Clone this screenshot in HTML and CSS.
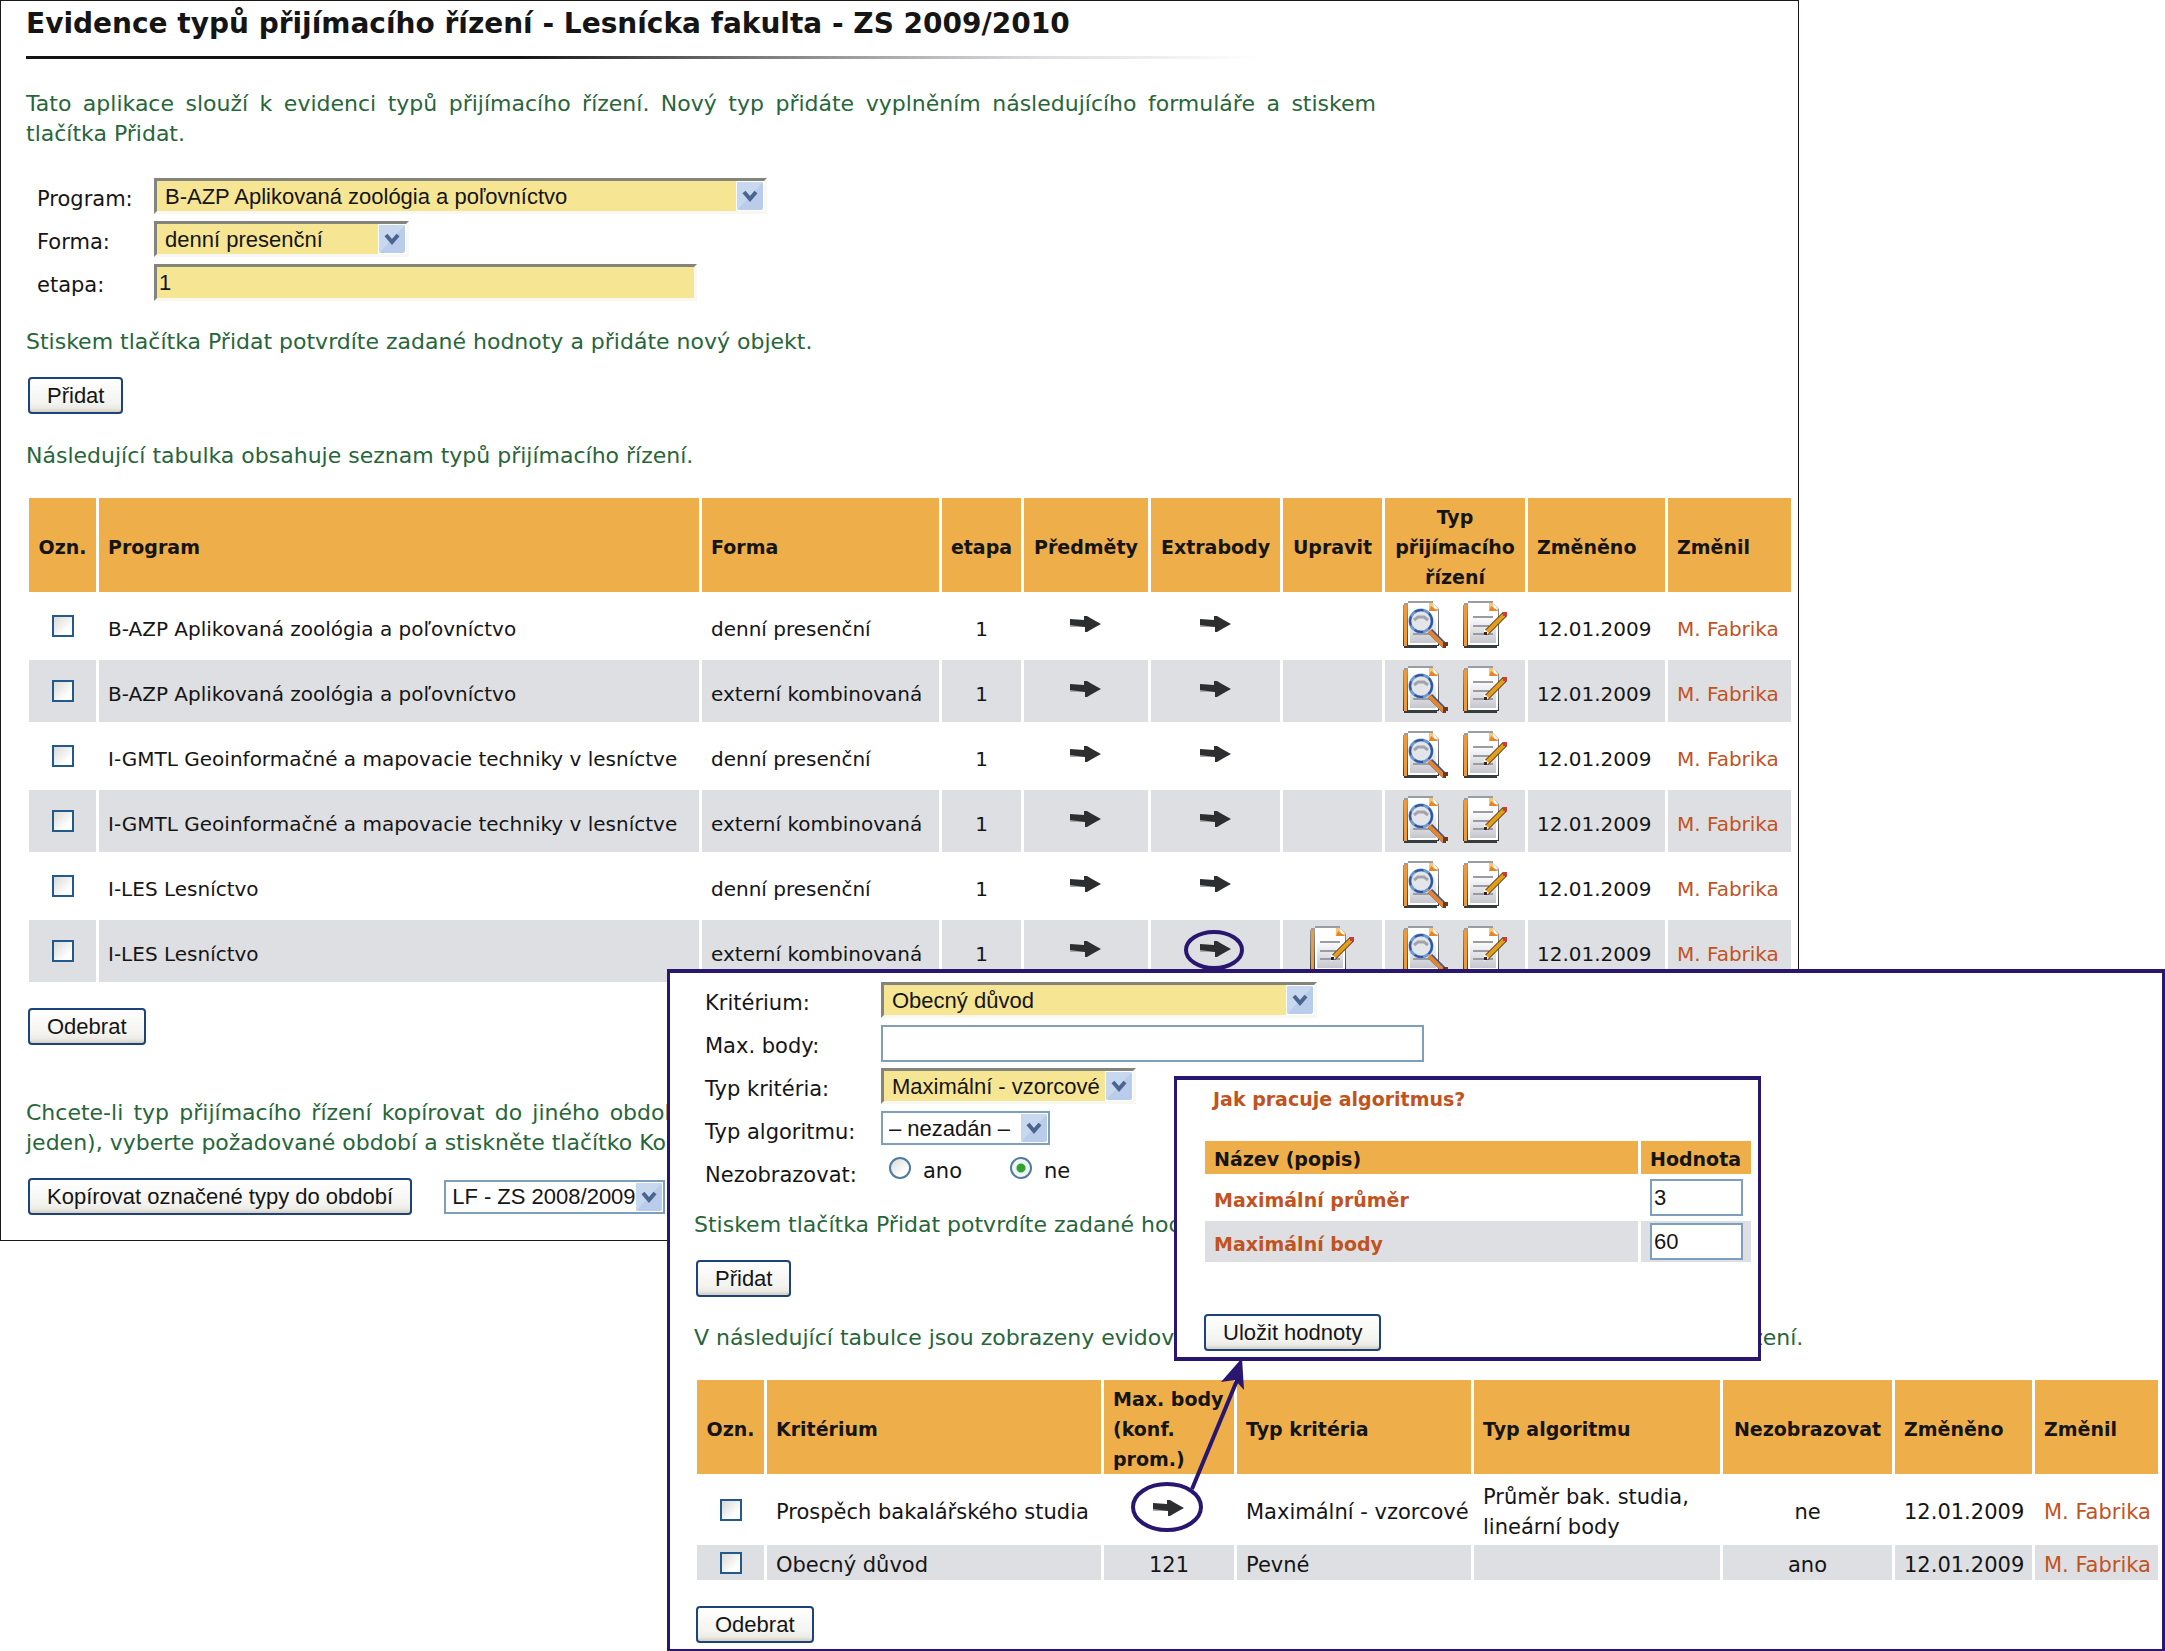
FILE: index.html
```html
<!DOCTYPE html>
<html lang="cs">
<head>
<meta charset="utf-8">
<title>Evidence typů přijímacího řízení</title>
<link rel="stylesheet" href="styles.css">
</head>
<body>
<svg class="defs" aria-hidden="true">
  <defs>
    <linearGradient id="paper" x1="0" y1="0" x2="0" y2="1">
      <stop offset="0.3" stop-color="#ffffff"/><stop offset="1" stop-color="#c6c7ce"/>
    </linearGradient>
    <linearGradient id="spine" x1="0" y1="0" x2="0" y2="1">
      <stop offset="0" stop-color="#a0a3a8"/><stop offset="1" stop-color="#33383a"/>
    </linearGradient>
  </defs>
  <symbol id="sheet" viewBox="0 0 45 47">
    <path d="M0 4h1V2h4V0h23l8 8v37h-2v2H1v-2H0z" fill="url(#spine)"/>
    <path d="M1 44h34v1h-2v2H1z" fill="#363d3f"/>
    <rect x="1" y="4" width="3" height="41" fill="#ee9a3c"/>
    <path d="M5 2h22l8 7v35H5z" fill="#fff"/>
    <path d="M7 3h19v7h7v32H7z" fill="url(#paper)"/>
    <path d="M5 0h25v2H5z" fill="#9a9da3"/>
    <path d="M26 2h4l5 6v2h-9z" fill="#f6c777"/>
    <path d="M30 2l5 6h-4z" fill="#fff"/>
    <path d="M28 5l7 5h-9z" fill="#e98426"/>
  </symbol>
  <symbol id="icon-view" viewBox="0 0 45 47">
    <use href="#sheet" width="45" height="47"/>
    <path d="M10 33h18" stroke="#9b9da5" stroke-width="2"/>
    <circle cx="18" cy="20" r="11" fill="#e3e5e9" stroke="#6f9ad0" stroke-width="3"/>
    <circle cx="18" cy="20" r="11" fill="none" stroke="#2f559e" stroke-width="2" stroke-dasharray="9 6"/>
    <path d="M11 19l4-3h6l4 3" fill="none" stroke="#a2a4aa" stroke-width="3"/>
    <path d="M27 30l15 15" stroke="#34549a" stroke-width="6"/>
    <path d="M26 30l15 15" stroke="#e88428" stroke-width="4"/>
    <path d="M40 41h5v4h-2v2h-3z" fill="#70391f"/>
  </symbol>
  <symbol id="icon-edit" viewBox="0 0 45 47">
    <use href="#sheet" width="45" height="47"/>
    <path d="M10 16h20M10 25h16M10 33h20" stroke="#9a9ca3" stroke-width="2"/>
    <path d="M23 32L42 13" stroke="#5b2f1e" stroke-width="6"/>
    <path d="M24 31L41 14" stroke="#e0a018" stroke-width="4"/>
    <path d="M21 28l5 4-5 3z" fill="#fff"/>
    <path d="M21 31h3v3h-3z" fill="#3a2020"/>
    <path d="M40 11h4v4h-4z" fill="#cf3a3c"/>
  </symbol>
  <symbol id="icon-arrow" viewBox="0 0 32 16">
    <path d="M0 8h15v3H0z" fill="#a9a9ac"/>
    <path d="M0 3l14 1V0h3l5 3 9 5-9 5-5 3h-2v-5l-15-2z" fill="#2d2e30"/>
  </symbol>
  <symbol id="icon-drop" viewBox="0 0 26 28">
    <rect width="26" height="28" rx="2" fill="#b9cdea"/>
    <path d="M0 0h26L0 28z" fill="#c8d8ee"/>
    <path d="M7 10l6 7 6-7" fill="none" stroke="#4a6590" stroke-width="4"/>
  </symbol>
</svg>

<div class="stage">
  <main class="panel">
    <h1>Evidence typů přijímacího řízení - Lesnícka fakulta - ZS 2009/2010</h1>
    <div class="rule"></div>
    <p class="note intro">Tato aplikace slouží k&nbsp;evidenci typů přijímacího řízení. Nový typ přidáte vyplněním následujícího formuláře a&nbsp;stiskem tlačítka Přidat.</p>

    <form class="fields">
      <label for="program">Program:</label>
      <span class="select sunken w-program"><select id="program"><option>B-AZP Aplikovaná zoológia a poľovníctvo</option></select><svg><use href="#icon-drop"/></svg></span>
      <label for="forma">Forma:</label>
      <span class="select sunken w-short"><select id="forma"><option>denní presenční</option></select><svg><use href="#icon-drop"/></svg></span>
      <label for="etapa">etapa:</label>
      <input class="text sunken w-text" id="etapa" type="text" value="1">
    </form>
    <p class="note submit-note">Stiskem tlačítka Přidat potvrdíte zadané hodnoty a přidáte nový objekt.</p>
    <button class="btn" type="button">Přidat</button>
    <p class="note list-note">Následující tabulka obsahuje seznam typů přijímacího řízení.</p>

    <table class="grid types">
      <colgroup><col class="c-mark"><col><col class="c-form"><col class="c-stage"><col class="c-subj"><col class="c-extra"><col class="c-edit"><col class="c-type"><col class="c-date"><col class="c-who"></colgroup>
      <thead>
        <tr><th class="mid">Ozn.</th><th>Program</th><th>Forma</th><th class="mid">etapa</th><th class="mid">Předměty</th><th class="mid">Extrabody</th><th class="mid">Upravit</th><th class="mid">Typ přijímacího řízení</th><th>Změněno</th><th>Změnil</th></tr>
      </thead>
      <tbody>
        <tr><td class="mark"><input type="checkbox" aria-label="Označit"></td><td>B-AZP Aplikovaná zoológia a poľovníctvo</td><td>denní presenční</td><td class="mid">1</td><td class="ico"><a href="#"><svg class="arrow"><use href="#icon-arrow"/></svg></a></td><td class="ico"><a href="#"><svg class="arrow"><use href="#icon-arrow"/></svg></a></td><td></td><td class="ico"><div class="pair"><a href="#"><svg class="doc"><use href="#icon-view"/></svg></a><a href="#"><svg class="doc"><use href="#icon-edit"/></svg></a></div></td><td>12.01.2009</td><td><a href="#">M. Fabrika</a></td></tr>
        <tr><td class="mark"><input type="checkbox" aria-label="Označit"></td><td>B-AZP Aplikovaná zoológia a poľovníctvo</td><td>externí kombinovaná</td><td class="mid">1</td><td class="ico"><a href="#"><svg class="arrow"><use href="#icon-arrow"/></svg></a></td><td class="ico"><a href="#"><svg class="arrow"><use href="#icon-arrow"/></svg></a></td><td></td><td class="ico"><div class="pair"><a href="#"><svg class="doc"><use href="#icon-view"/></svg></a><a href="#"><svg class="doc"><use href="#icon-edit"/></svg></a></div></td><td>12.01.2009</td><td><a href="#">M. Fabrika</a></td></tr>
        <tr><td class="mark"><input type="checkbox" aria-label="Označit"></td><td>I-GMTL Geoinformačné a mapovacie techniky v lesníctve</td><td>denní presenční</td><td class="mid">1</td><td class="ico"><a href="#"><svg class="arrow"><use href="#icon-arrow"/></svg></a></td><td class="ico"><a href="#"><svg class="arrow"><use href="#icon-arrow"/></svg></a></td><td></td><td class="ico"><div class="pair"><a href="#"><svg class="doc"><use href="#icon-view"/></svg></a><a href="#"><svg class="doc"><use href="#icon-edit"/></svg></a></div></td><td>12.01.2009</td><td><a href="#">M. Fabrika</a></td></tr>
        <tr><td class="mark"><input type="checkbox" aria-label="Označit"></td><td>I-GMTL Geoinformačné a mapovacie techniky v lesníctve</td><td>externí kombinovaná</td><td class="mid">1</td><td class="ico"><a href="#"><svg class="arrow"><use href="#icon-arrow"/></svg></a></td><td class="ico"><a href="#"><svg class="arrow"><use href="#icon-arrow"/></svg></a></td><td></td><td class="ico"><div class="pair"><a href="#"><svg class="doc"><use href="#icon-view"/></svg></a><a href="#"><svg class="doc"><use href="#icon-edit"/></svg></a></div></td><td>12.01.2009</td><td><a href="#">M. Fabrika</a></td></tr>
        <tr><td class="mark"><input type="checkbox" aria-label="Označit"></td><td>I-LES Lesníctvo</td><td>denní presenční</td><td class="mid">1</td><td class="ico"><a href="#"><svg class="arrow"><use href="#icon-arrow"/></svg></a></td><td class="ico"><a href="#"><svg class="arrow"><use href="#icon-arrow"/></svg></a></td><td></td><td class="ico"><div class="pair"><a href="#"><svg class="doc"><use href="#icon-view"/></svg></a><a href="#"><svg class="doc"><use href="#icon-edit"/></svg></a></div></td><td>12.01.2009</td><td><a href="#">M. Fabrika</a></td></tr>
        <tr><td class="mark"><input type="checkbox" aria-label="Označit"></td><td>I-LES Lesníctvo</td><td>externí kombinovaná</td><td class="mid">1</td><td class="ico"><a href="#"><svg class="arrow"><use href="#icon-arrow"/></svg></a></td><td class="ico"><a href="#"><svg class="arrow"><use href="#icon-arrow"/></svg></a></td><td class="ico"><a href="#"><svg class="doc"><use href="#icon-edit"/></svg></a></td><td class="ico"><div class="pair"><a href="#"><svg class="doc"><use href="#icon-view"/></svg></a><a href="#"><svg class="doc"><use href="#icon-edit"/></svg></a></div></td><td>12.01.2009</td><td><a href="#">M. Fabrika</a></td></tr>
      </tbody>
    </table>
    <button class="btn after-table" type="button">Odebrat</button>

    <p class="note copy-note">Chcete-li typ přijímacího řízení kopírovat do jiného období, označte nejprve požadované typy v&nbsp;tabulce výše (nejméně jeden),&nbsp;vyberte požadované období a stiskněte tlačítko Kopírovat označené typy do období.</p>
    <div class="copy-row">
      <button class="btn" type="button">Kopírovat označené typy do období</button>
      <span class="select flat w-period"><select aria-label="Období"><option>LF - ZS 2008/2009</option></select><svg><use href="#icon-drop"/></svg></span>
    </div>
  </main>

  <section class="window criteria">
    <form class="fields">
      <label for="krit">Kritérium:</label>
      <span class="select sunken w-criterion"><select id="krit"><option>Obecný důvod</option></select><svg><use href="#icon-drop"/></svg></span>
      <label for="max">Max. body:</label>
      <input class="text flat w-text" id="max" type="text">
      <label for="tkrit">Typ kritéria:</label>
      <span class="select sunken w-short"><select id="tkrit"><option>Maximální - vzorcové</option></select><svg><use href="#icon-drop"/></svg></span>
      <label for="talg">Typ algoritmu:</label>
      <span class="select flat w-algo"><select id="talg"><option>– nezadán –</option></select><svg><use href="#icon-drop"/></svg></span>
      <span class="caption">Nezobrazovat:</span>
      <span class="radios">
        <label><input type="radio" name="hide">ano</label>
        <label><input type="radio" name="hide" checked>ne</label>
      </span>
    </form>
    <p class="note submit-note">Stiskem tlačítka Přidat potvrdíte zadané hodnoty a přidáte nový objekt.</p>
    <button class="btn" type="button">Přidat</button>
    <p class="note list-note">V následující tabulce jsou zobrazeny evidované důvody za extrabody daného typu přijímacího řízení.</p>

    <table class="grid reasons">
      <colgroup><col class="c-mark"><col><col class="c-max"><col class="c-krit"><col class="c-alg"><col class="c-hide"><col class="c-date"><col class="c-who"></colgroup>
      <thead>
        <tr><th class="mid">Ozn.</th><th>Kritérium</th><th>Max. body (konf. prom.)</th><th>Typ kritéria</th><th>Typ algoritmu</th><th class="mid">Nezobrazovat</th><th>Změněno</th><th>Změnil</th></tr>
      </thead>
      <tbody>
        <tr><td class="mark"><input type="checkbox" aria-label="Označit"></td><td>Prospěch bakalářského studia</td><td class="ico"><a href="#"><svg class="arrow"><use href="#icon-arrow"/></svg></a></td><td>Maximální - vzorcové</td><td class="wrap">Průměr bak. studia, lineární body</td><td class="mid">ne</td><td>12.01.2009</td><td><a href="#">M. Fabrika</a></td></tr>
        <tr><td class="mark"><input type="checkbox" aria-label="Označit"></td><td>Obecný důvod</td><td class="mid">121</td><td>Pevné</td><td></td><td class="mid">ano</td><td>12.01.2009</td><td><a href="#">M. Fabrika</a></td></tr>
      </tbody>
    </table>
    <button class="btn after-table" type="button">Odebrat</button>
  </section>

  <section class="window algorithm">
    <a class="help" href="#">Jak pracuje algoritmus?</a>
    <table class="grid values">
      <colgroup><col><col class="c-value"></colgroup>
      <thead><tr><th>Název (popis)</th><th>Hodnota</th></tr></thead>
      <tbody>
        <tr><td><a href="#">Maximální průměr</a></td><td class="entry"><input class="text flat" type="text" aria-label="Maximální průměr" value="3"></td></tr>
        <tr><td><a href="#">Maximální body</a></td><td class="entry"><input class="text flat" type="text" aria-label="Maximální body" value="60"></td></tr>
      </tbody>
    </table>
    <button class="btn" type="button">Uložit hodnoty</button>
  </section>

  <svg class="callout ring-top" viewBox="0 0 60 40"><ellipse cx="30" cy="20" rx="28" ry="18"/></svg>
  <svg class="callout ring-link" viewBox="0 0 120 180">
    <ellipse cx="37" cy="149" rx="34" ry="23"/>
    <path d="M62 131L108 20"/>
    <path class="tip" d="M112 0L91 24L105 22L114 32z"/>
  </svg>
</div>
</body>
</html>
```

FILE: styles.css
```css
* { box-sizing: border-box; }

body {
  margin: 0;
  background: #fff;
  color: #151515;
  font: 20px/30px "DejaVu Sans", Verdana, sans-serif;
}

.defs { position: absolute; width: 0; height: 0; }

a { color: #c1531f; text-decoration: none; }

.stage { position: relative; min-height: 100vh; }

/* main evidence page */
.panel {
  margin-right: 366px;
  padding: 8px 4px 25px 25px;
  border: 1px solid #1c1818;
}

h1 { margin: 0; font-size: 28px; line-height: 30px; white-space: nowrap; }

.rule {
  width: 1234px;
  max-width: 100%;
  height: 3px;
  margin-top: 17px;
  background: linear-gradient(to right, #141414 40%, #7c8082 60%, #b9b8bd 73%, #dcdce2 82%, #fff);
}

.note { max-width: 1350px; margin: 0; color: #27663a; font-size: 22px; text-align: justify; }
.intro { margin-top: 30px; }
.submit-note { margin-top: 27px; }
.list-note { margin-top: 27px; }
.copy-note { margin-top: 53px; }

/* forms */
.fields {
  display: grid;
  grid-template-columns: 117px 1fr;
  grid-auto-rows: 36px;
  row-gap: 7px;
  justify-items: start;
  margin-top: 29px;
  padding-left: 11px;
  font-size: 21px;
}

.fields > label, .caption { padding-top: 6px; }

.select { position: relative; display: block; height: 36px; }

.select select {
  display: block;
  width: 100%;
  height: 100%;
  padding: 0 32px 0 8px;
  border: 0;
  border-radius: 0;
  appearance: none;
  background: transparent;
  color: #151515;
  font: 22px "Liberation Sans", Arial, sans-serif;
}

.select svg {
  position: absolute;
  top: 0;
  right: 0;
  width: 28px;
  height: 100%;
  padding: 1px;
  background: #fff;
  pointer-events: none;
}

.sunken {
  border: 3px solid;
  border-color: #83857c #f8f8f2 #f8f8f2 #83857c;
  background: #f6e694;
}

.flat { border: 2px solid #7d9fbc; background: #fff; }
.select.flat { height: 34px; }

.text {
  display: block;
  height: 37px;
  padding: 0 2px;
  border-radius: 0;
  color: #151515;
  font: 22px "Liberation Sans", Arial, sans-serif;
}

.w-program { width: 613px; }
.w-short { width: 255px; }
.w-text { width: 543px; }
.w-criterion { width: 436px; }
.w-algo { width: 169px; }
.w-period { width: 221px; }
.w-period select, .w-algo select { padding: 0 24px 0 6px; }

.btn {
  display: block;
  height: 37px;
  margin: 20px 0 0 2px;
  padding: 0 17px;
  border: 2px solid #1c437d;
  border-radius: 4px;
  background: linear-gradient(#fff, #f2f2ee 75%, #ebeae4 88%, #d6cfc2);
  color: #151515;
  font: 22px "Liberation Sans", Arial, sans-serif;
  white-space: nowrap;
}

.btn.after-table { margin-top: 23px; }

.copy-row { display: flex; align-items: center; gap: 32px; margin-top: 20px; }
.copy-row .btn { margin-top: 0; }

input[type="checkbox"], input[type="radio"] {
  display: block;
  width: 22px;
  height: 22px;
  margin: 0;
  appearance: none;
  border: 2px solid #235a8c;
  background: linear-gradient(135deg, #d9d9d6, #fff 75%);
}

input[type="radio"] { border-color: #4c7ca3; border-radius: 50%; }

input[type="radio"]:checked {
  background: radial-gradient(circle, #2fa32f 0 4px, #eef3ee 5px, #fff);
}

.radios { display: flex; gap: 48px; padding-left: 8px; }
.radios label { display: flex; gap: 12px; line-height: 34px; }
.radios input { margin-top: 3px; }

/* data tables */
.grid {
  width: 100%;
  table-layout: fixed;
  border-collapse: separate;
  border-spacing: 3px;
}

.grid th {
  padding: 4px 0 0 9px;
  background: #eeae4a;
  font-size: 19px;
  text-align: left;
}

.grid td { height: 35px; padding: 5px 0 0 9px; white-space: nowrap; }
.grid tbody tr:nth-child(even) td { background: #dedfe3; }
.grid .mid { padding-left: 0; padding-right: 0; text-align: center; }
.grid td.mark { padding: 0; }
.grid .mark input { margin: 0 auto; }
.grid td.ico { padding: 0 0 4px; }
.grid td.ico a { display: block; }
.grid td.wrap { white-space: normal; }

.types { margin-top: 24px; }
.types td { height: 62px; }
.reasons { margin-top: 24px; }
.reasons td { font-size: 21px; }

.arrow { display: block; width: 32px; height: 16px; margin: 0 auto; }
.doc { display: block; width: 45px; height: 47px; margin: 0 auto; }
.pair { display: flex; justify-content: center; gap: 15px; }

.c-mark { width: 67px; }
.c-form { width: 237px; }
.c-stage { width: 79px; }
.c-subj { width: 124px; }
.c-extra { width: 129px; }
.c-edit { width: 99px; }
.c-type { width: 140px; }
.c-date { width: 137px; }
.c-who { width: 123px; }
.c-max { width: 130px; }
.c-krit { width: 234px; }
.c-alg { width: 246px; }
.c-hide { width: 169px; }
.c-value { width: 110px; }

/* overlapping windows */
.window {
  position: absolute;
  border: 3px solid #29176f;
  border-top-width: 4px;
  background: #fff;
}

.criteria { top: 969px; left: 667px; right: 0; padding: 9px 1px 6px 24px; }
.criteria .fields { grid-template-columns: 176px 1fr; margin-top: 0; }
.criteria .submit-note { margin-top: 20px; }
.criteria .list-note { margin-top: 26px; white-space: nowrap; }

.algorithm {
  top: 1076px;
  left: 1174px;
  width: 587px;
  padding: 4px 4px 6px 25px;
  border-bottom-width: 4px;
}

.help { display: block; margin: 0 11px 24px; font-size: 19px; font-weight: bold; }
.values th { padding-top: 3px; }
.values td { font-size: 19px; font-weight: bold; }
.values td.entry { padding: 2px 8px 2px 9px; }
.values .text { width: 100%; }
.algorithm .btn { margin-top: 49px; }

/* marks drawn over the windows */
.callout { position: absolute; fill: none; stroke: #29176f; stroke-width: 4px; pointer-events: none; }
.callout .tip { fill: #29176f; stroke: none; }
.ring-top { top: 930px; left: 1184px; width: 60px; height: 40px; }
.ring-link { top: 1358px; left: 1130px; width: 120px; height: 180px; }
```
